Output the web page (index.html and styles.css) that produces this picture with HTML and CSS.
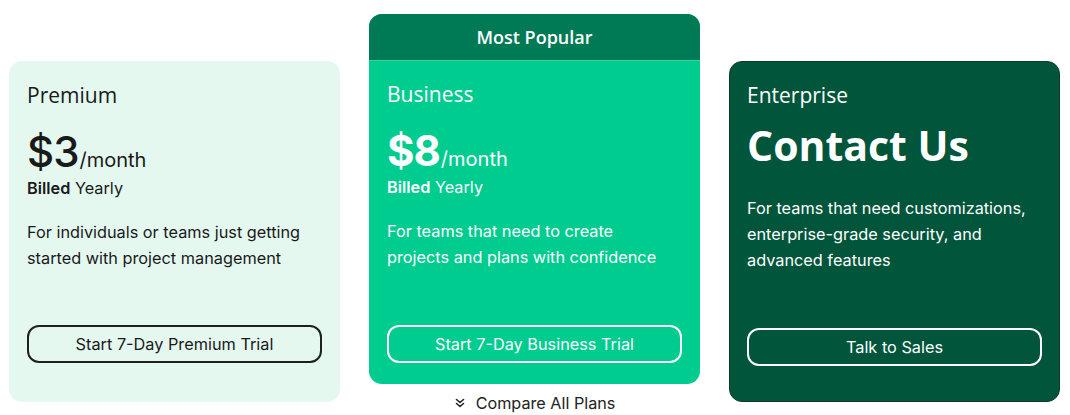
FILE: index.html
```html
<!DOCTYPE html>
<html lang="en">
<head>
<meta charset="utf-8">
<title>Plans</title>
<link rel="stylesheet" href="styles.css">
</head>
<body>
<div class="plans">
  <section class="card card-premium">
    <h2 class="plan-name">Premium</h2>
    <div class="price"><span class="amount">$3</span><span class="per">/month</span></div>
    <p class="billed"><strong>Billed</strong> Yearly</p>
    <p class="desc">For individuals or teams just getting<br>started with project management</p>
    <button class="btn btn-dark">Start 7-Day Premium Trial</button>
  </section>

  <div class="popular-col">
    <section class="card-business">
      <div class="badge">Most Popular</div>
      <div class="card card-bus-body">
        <h2 class="plan-name">Business</h2>
        <div class="price"><span class="amount">$8</span><span class="per">/month</span></div>
        <p class="billed"><strong>Billed</strong> Yearly</p>
        <p class="desc">For teams that need to create<br>projects and plans with confidence</p>
        <button class="btn btn-light">Start 7-Day Business Trial</button>
      </div>
    </section>
    <a class="compare" href="#">
      <svg width="12" height="12" viewBox="0 0 12 12" aria-hidden="true"><path d="M2.5 2.5 6 5.5 9.5 2.5M2.5 6.5 6 9.5 9.5 6.5" fill="none" stroke="#222" stroke-width="1.6" stroke-linecap="round" stroke-linejoin="round"/></svg>
      <span>Compare All Plans</span>
    </a>
  </div>

  <section class="card card-enterprise">
    <h2 class="plan-name">Enterprise</h2>
    <div class="contact">Contact Us</div>
    <p class="desc desc-ent">For teams that need customizations,<br>enterprise-grade security, and<br>advanced features</p>
    <button class="btn btn-light btn-ent">Talk to Sales</button>
  </section>
</div>
</body>
</html>
```

FILE: styles.css
```css
* { box-sizing: border-box; }
body {
  margin: 0;
  background: #ffffff;
  font-family: Inter, "Liberation Sans", sans-serif;
  color: #1a1a1a;
}
.plans {
  display: flex;
  align-items: flex-start;
  gap: 29px;
  padding: 14px 10px 0 9px;
}
.card {
  width: 331px;
  display: flex;
  flex-direction: column;
  padding: 20px 18px 39px;
  border-radius: 13px;
}
.card-premium, .card-enterprise {
  margin-top: 47px;
  height: 341px;
}
.card-premium { background: #e4f8f0; }
.card-enterprise {
  background: #00553a;
  color: #ffffff;
  border: 1px solid #0a3b29;
  padding: 19px 17px 35px;
}
.popular-col {
  width: 331px;
  display: flex;
  flex-direction: column;
  align-items: center;
}
.card-business {
  width: 331px;
  border-radius: 13px;
  overflow: hidden;
  background: #00cc8f;
  color: #ffffff;
}
.badge {
  height: 47px;
  background: #007a55;
  border-bottom: 1px solid #2fd69f;
  display: flex;
  align-items: center;
  justify-content: center;
  font-family: "Open Sans", sans-serif;
  font-weight: 600;
  font-size: 18px;
  color: #ffffff;
}
.card-bus-body {
  height: 323px;
  padding: 19px 18px 21px;
  border-radius: 0;
}
.plan-name {
  margin: 0;
  font-family: "Open Sans", sans-serif;
  font-weight: 500;
  font-size: 21px;
  line-height: 28px;
}
.price {
  margin-top: 22px;
  display: flex;
  align-items: baseline;
  line-height: 42px;
}
.amount {
  font-size: 42px;
  font-weight: 500;
  letter-spacing: -1px;
}
.card-bus-body .amount { font-weight: 700; }
.per {
  font-size: 20px;
  margin-left: 1px;
}
.billed {
  margin: -3px 0 0;
  font-size: 16.3px;
  line-height: 20px;
}
.billed strong { font-weight: 600; }
.desc {
  margin: 21px 0 0;
  font-size: 16.3px;
  line-height: 26px;
}
.contact {
  margin-top: 12px;
  font-family: "Open Sans", sans-serif;
  font-weight: 700;
  font-size: 41px;
  line-height: 48px;
  letter-spacing: 0;
}
.desc-ent { margin-top: 26px; }
.btn {
  margin-top: auto;
  height: 38px;
  width: 100%;
  border-radius: 12px;
  font-family: Inter, "Liberation Sans", sans-serif;
  font-size: 16.3px;
  background: transparent;
  cursor: pointer;
}
.btn-dark {
  border: 2px solid #1f1f1f;
  color: #1a1a1a;
}
.btn-light {
  border: 2px solid #ffffff;
  color: #ffffff;
}
.compare {
  margin-top: 9px;
  display: flex;
  align-items: center;
  gap: 10px;
  font-size: 16.2px;
  line-height: 20px;
  color: #222222;
  text-decoration: none;
}
.compare svg { display: block; }
```
